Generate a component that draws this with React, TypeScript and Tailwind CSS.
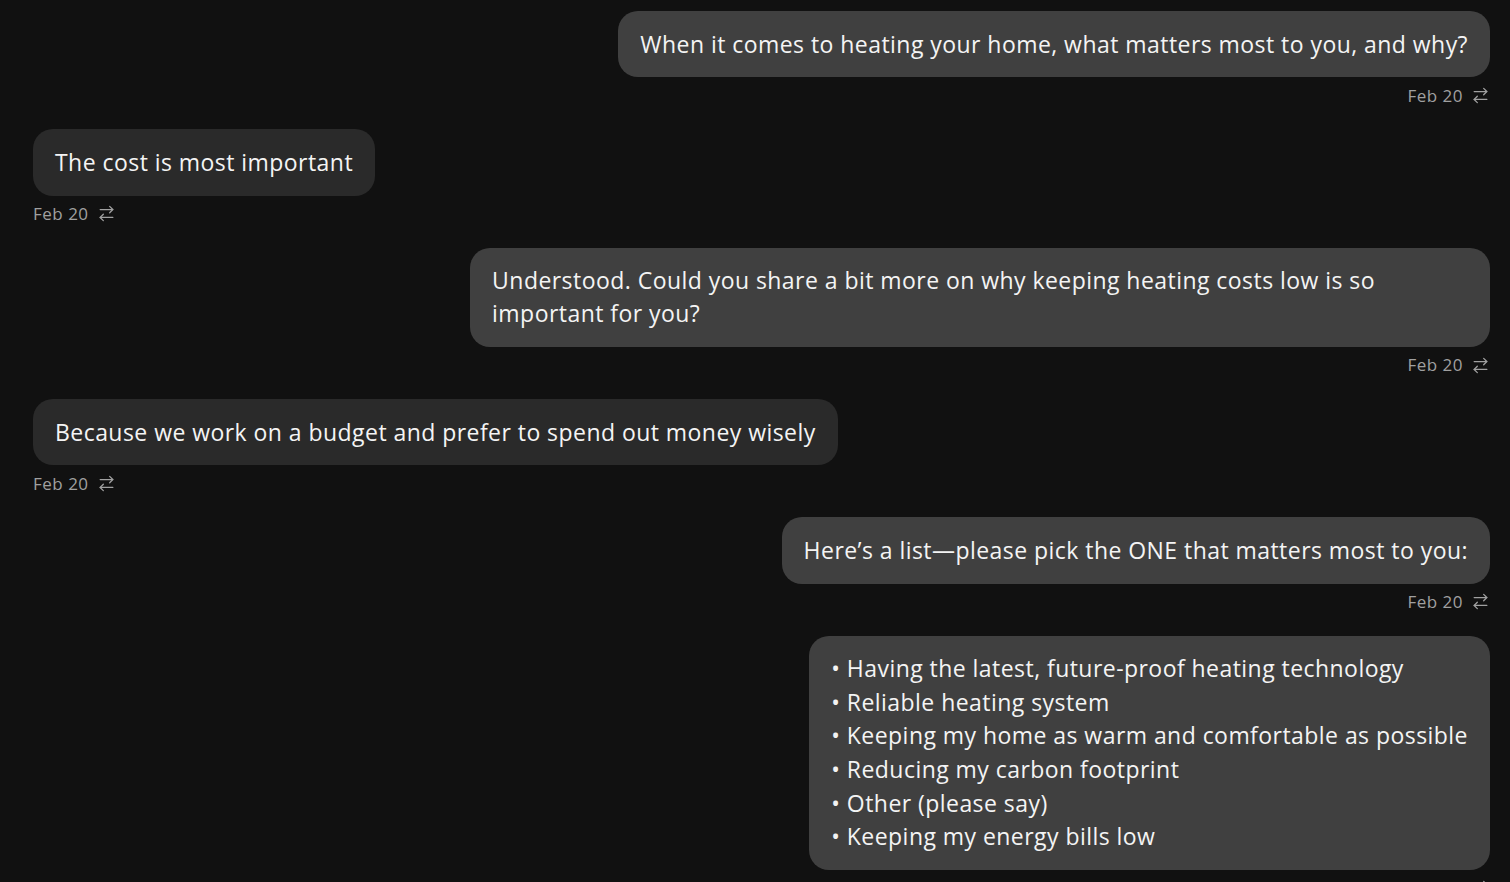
import { ArrowRightLeft } from 'lucide-react';

interface Message {
  id: number;
  fromMe: boolean;
  lines: string[];
  date: string;
}

const messages: Message[] = [
  { id: 1, fromMe: true, lines: ['When it comes to heating your home, what matters most to you, and why?'], date: 'Feb 20' },
  { id: 2, fromMe: false, lines: ['The cost is most important'], date: 'Feb 20' },
  {
    id: 3,
    fromMe: true,
    lines: ['Understood. Could you share a bit more on why keeping heating costs low is so important for you?'],
    date: 'Feb 20',
  },
  { id: 4, fromMe: false, lines: ['Because we work on a budget and prefer to spend out money wisely'], date: 'Feb 20' },
  { id: 5, fromMe: true, lines: ['Here\u2019s a list\u2014please pick the ONE that matters most to you:'], date: 'Feb 20' },
  {
    id: 6,
    fromMe: true,
    lines: [
      '\u2022 Having the latest, future-proof heating technology',
      '\u2022 Reliable heating system',
      '\u2022 Keeping my home as warm and comfortable as possible',
      '\u2022 Reducing my carbon footprint',
      '\u2022 Other (please say)',
      '\u2022 Keeping my energy bills low',
    ],
    date: 'Feb 20',
  },
];

function ChatBubble({ message }: { message: Message }) {
  const isList = message.lines.length > 1;
  return (
    <div className={`flex flex-col mb-[22px] ${message.fromMe ? 'items-end' : 'items-start'}`}>
      <div
        className={`max-w-[70%] rounded-[20px] px-[22px] py-[16.5px] text-[23px] tracking-[0.45px] text-[#f4f4f4] ${
          isList ? 'leading-[33.6px]' : 'leading-[33.3px]'
        } ${message.fromMe ? 'bg-[#404040]' : 'bg-[#2a2a2a]'}`}
      >
        {message.lines.map((line, i) => (
          <div key={i}>{line}</div>
        ))}
      </div>
      {/* timestamp + resend marker */}
      <div className="mt-[6px] h-[24px] flex items-center gap-[8px] text-[17px] tracking-[0.5px] text-[#a0a0a0]">
        <span>{message.date}</span>
        <ArrowRightLeft className="w-[19px] h-[19px]" strokeWidth={1.6} />
      </div>
    </div>
  );
}

export default function App() {
  return (
    <div
      className="min-h-screen bg-[#111111] pt-[11px] pl-[33px] pr-[20px]"
      style={{ fontFamily: '"Open Sans", "Liberation Sans", sans-serif' }}
    >
      {messages.map((m) => (
        <ChatBubble key={m.id} message={m} />
      ))}
    </div>
  );
}
